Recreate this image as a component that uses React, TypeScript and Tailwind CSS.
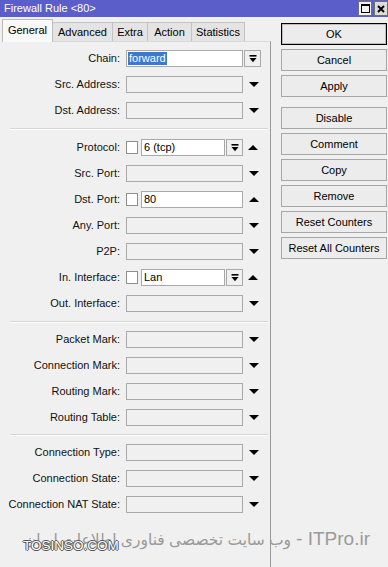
import React from "react";

function Down() {
  return (
    <svg width="10" height="5" viewBox="0 0 10 5">
      <path d="M0 0H10L5 5Z" fill="#000" />
    </svg>
  );
}
function Up() {
  return (
    <svg width="10" height="5" viewBox="0 0 10 5">
      <path d="M0 5H10L5 0Z" fill="#000" />
    </svg>
  );
}
function DropBtn() {
  return (
    <div className="ml-[1px] flex h-[17px] w-[17px] items-center justify-center border border-[#a9a9a9] bg-[#f0f0f0]">
      <svg width="8" height="8" viewBox="0 0 8 8">
        <rect x="0.5" y="0" width="7" height="1.6" fill="#000" />
        <path d="M0.5 3H7.5L4 7.2Z" fill="#000" />
      </svg>
    </div>
  );
}
function Check() {
  return <div className="h-[13px] w-[12px] border border-[#8e8e8e] bg-white" />;
}

function Row({ label, children }: { label: string; children: React.ReactNode }) {
  return (
    <div className="flex h-[17px] items-center">
      <div className="w-[118px] whitespace-nowrap text-right text-[11px] leading-none text-[#111]">{label}</div>
      <div className="ml-[6px] flex h-full items-center">{children}</div>
    </div>
  );
}

function EmptyRow({ label }: { label: string }) {
  return (
    <Row label={label}>
      <div className="h-[17px] w-[117px] border border-[#a9a9a9] bg-[#f0f0f0]" />
      <div className="ml-[6px] flex items-center">
        <Down />
      </div>
    </Row>
  );
}

function Sep({ h }: { h: string }) {
  return (
    <div className={`flex items-center ${h}`}>
      <div className="ml-[8px] h-[2px] w-[258px] border-t border-b border-t-[#d6d6d6] border-b-white" />
    </div>
  );
}

function Btn({ children, def, className }: { children: React.ReactNode; def?: boolean; className?: string }) {
  return (
    <div
      className={`flex h-[22px] w-[106px] items-center justify-center bg-[#ececec] text-[11px] leading-none text-black ${
        def ? "border border-black shadow-[inset_0_0_0_1px_#bdbdbd]" : "border border-[#a6a6a6]"
      } ${className ?? ""}`}
    >
      {children}
    </div>
  );
}

export default function App() {
  return (
    <div className="relative h-[567px] w-[388px] overflow-hidden bg-[#f0f0f0] font-['Liberation_Sans',Arial,sans-serif]">
      {/* title bar */}
      <div className="flex h-[17px] items-center bg-[#5b5ec9]">
        <div className="pl-[4px] text-[11px] leading-none text-white">Firewall Rule &lt;80&gt;</div>
        <div className="ml-auto flex h-full items-start gap-[2px] pt-[1px]">
          <div className="flex h-[15px] w-[14px] items-center justify-center border border-[#6f6f6f] bg-[#f2f2f2]">
            <div className="h-[9px] w-[9px] border border-t-2 border-black" />
          </div>
          <div className="flex h-[15px] w-[14px] items-center justify-center border border-[#6f6f6f] bg-[#dcdcdc]">
            <svg width="8" height="8" viewBox="0 0 8 8">
              <path d="M1 1L7 7M7 1L1 7" stroke="#000" strokeWidth="2" />
            </svg>
          </div>
        </div>
      </div>

      <div className="flex">
        {/* left column */}
        <div className="w-[271px]">
          <div className="flex h-[24px] items-end pl-[2px]">
            <div className="relative z-10 mb-[-1px] flex h-[23px] w-[51px] items-center justify-center border border-b-0 border-[#bcbcbc] bg-[#f9f9f9] pb-[1px] text-[11px] leading-none">
              General
            </div>
            <div className="flex h-[19px] w-[60px] items-center justify-center border border-l-0 border-b-0 border-[#c2c2c2] bg-[#e4e4e4] text-[11px] leading-none">
              Advanced
            </div>
            <div className="flex h-[19px] w-[35px] items-center justify-center border border-l-0 border-b-0 border-[#c2c2c2] bg-[#e4e4e4] text-[11px] leading-none">
              Extra
            </div>
            <div className="flex h-[19px] w-[44px] items-center justify-center border border-l-0 border-b-0 border-[#c2c2c2] bg-[#e4e4e4] text-[11px] leading-none">
              Action
            </div>
            <div className="flex h-[19px] w-[53px] items-center justify-center border border-l-0 border-b-0 border-[#c2c2c2] bg-[#e4e4e4] text-[11px] leading-none">
              Statistics
            </div>
          </div>
          <div className="ml-[2px] h-[526px] w-[269px] border-t border-r border-t-[#d9d9d9] border-r-[#9a9a9a] pt-[8px]">
            <div className="flex flex-col gap-[9px]">
              <Row label="Chain:">
                <div className="flex h-[17px] w-[117px] items-center border border-[#a9a9a9] bg-white pl-[1px]">
                  <span className="bg-[#3a78d4] px-[1px] text-[11px] leading-[13px] text-white">forward</span>
                </div>
                <DropBtn />
              </Row>
              <EmptyRow label="Src. Address:" />
              <EmptyRow label="Dst. Address:" />
            </div>
            <Sep h="h-[20px]" />
            <div className="flex flex-col gap-[9px]">
              <Row label="Protocol:">
                <Check />
                <div className="ml-[3px] flex h-[17px] w-[84px] items-center border border-[#a9a9a9] bg-white pl-[2px] text-[11px] leading-none">
                  6 (tcp)
                </div>
                <DropBtn />
                <div className="ml-[5px] flex items-center">
                  <Up />
                </div>
              </Row>
              <EmptyRow label="Src. Port:" />
              <Row label="Dst. Port:">
                <Check />
                <div className="ml-[3px] flex h-[17px] w-[102px] items-center border border-[#a9a9a9] bg-white pl-[2px] text-[11px] leading-none">
                  80
                </div>
                <div className="ml-[6px] flex items-center">
                  <Up />
                </div>
              </Row>
              <EmptyRow label="Any. Port:" />
              <EmptyRow label="P2P:" />
              <Row label="In. Interface:">
                <Check />
                <div className="ml-[3px] flex h-[17px] w-[84px] items-center border border-[#a9a9a9] bg-white pl-[2px] text-[11px] leading-none">
                  Lan
                </div>
                <DropBtn />
                <div className="ml-[5px] flex items-center">
                  <Up />
                </div>
              </Row>
              <EmptyRow label="Out. Interface:" />
            </div>
            <Sep h="h-[19px]" />
            <div className="flex flex-col gap-[9px]">
              <EmptyRow label="Packet Mark:" />
              <EmptyRow label="Connection Mark:" />
              <EmptyRow label="Routing Mark:" />
              <EmptyRow label="Routing Table:" />
            </div>
            <Sep h="h-[18px]" />
            <div className="flex flex-col gap-[9px]">
              <EmptyRow label="Connection Type:" />
              <EmptyRow label="Connection State:" />
              <EmptyRow label="Connection NAT State:" />
            </div>
          </div>
        </div>

        {/* right column */}
        <div className="flex flex-col pl-[10px] pt-[6px]">
          <Btn def>OK</Btn>
          <Btn className="mt-[4px]">Cancel</Btn>
          <Btn className="mt-[4px]">Apply</Btn>
          <Btn className="mt-[10px]">Disable</Btn>
          <Btn className="mt-[4px]">Comment</Btn>
          <Btn className="mt-[4px]">Copy</Btn>
          <Btn className="mt-[4px]">Remove</Btn>
          <Btn className="mt-[4px]">Reset Counters</Btn>
          <Btn className="mt-[4px]">Reset All Counters</Btn>
        </div>
      </div>

      {/* watermark overlay */}
      <div
        dir="rtl"
        className="pointer-events-none absolute right-[18px] top-[527px] flex items-baseline whitespace-nowrap font-['Liberation_Sans','DejaVu_Sans',sans-serif] leading-[24px] text-[#9a9a9a]"
      >
        <span className="text-[19px]">ITPro.ir -</span>
        <span className="mr-[5px] text-[15.5px]">وب سایت تخصصی فناوری اطلاعات ایران</span>
      </div>
      <div className="pointer-events-none absolute left-[23px] top-[539px] whitespace-nowrap text-[13.5px] leading-[14px] text-white [text-shadow:-1px_0_0_#555,1px_0_0_#555,0_-1px_0_#555,0_1px_0_#555]">
        TOSINSO.COM
      </div>
    </div>
  );
}
